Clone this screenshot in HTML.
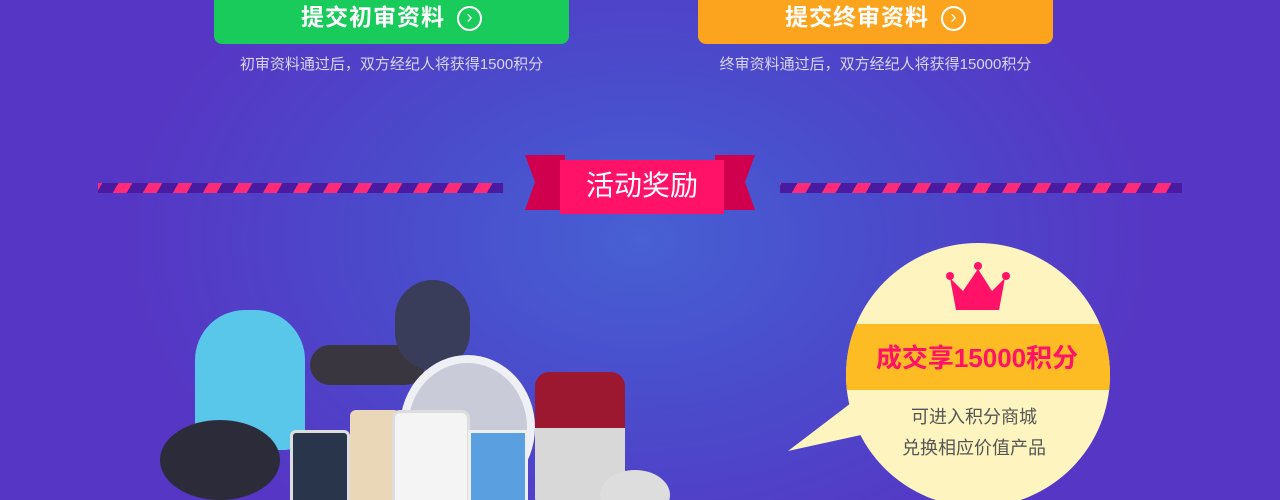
<!DOCTYPE html>
<html style="width:1280px;height:500px;overflow:hidden"><head><meta charset="utf-8"><style>
*{margin:0;padding:0;box-sizing:border-box}
body{width:1280px;height:500px;overflow:hidden;position:relative;font-family:"Liberation Sans","Noto Sans CJK SC",sans-serif;
background:radial-gradient(ellipse 520px 360px at 640px 240px,#4760d2 0%,#4a4ccc 45%,#5636c4 100%);}
.btn{position:absolute;top:-10px;height:54px;border-radius:8px;color:#fff;font-size:23px;font-weight:bold;text-align:center;line-height:54px;letter-spacing:1px}
.btn span{display:inline-block;width:25px;height:25px;border:2px solid #fff;border-radius:50%;font-size:18px;line-height:19px;vertical-align:2px;margin-left:12px;letter-spacing:0;font-weight:normal}
.sub{position:absolute;top:53px;color:#d8d4f4;font-size:15px;text-align:center}
.stripe{position:absolute;top:183px;height:10px;background:repeating-linear-gradient(-60deg,#4a1aa0 0 14px,#ff2a78 14px 26px)}
</style></head><body>
<div class="btn" style="left:214px;width:355px;background:#18cb5a">提交初审资料<span>›</span></div>
<div class="sub" style="left:214px;width:355px">初审资料通过后，双方经纪人将获得1500积分</div>
<div class="btn" style="left:698px;width:355px;background:#fda41f">提交终审资料<span>›</span></div>
<div class="sub" style="left:698px;width:355px">终审资料通过后，双方经纪人将获得15000积分</div>
<div class="stripe" style="left:98px;width:405px"></div>
<div class="stripe" style="left:780px;width:402px"></div>
<svg style="position:absolute;left:520px;top:150px" width="240" height="70">
<polygon points="5,5 45,5 45,60 5,60 15,32" fill="#d0004e"/>
<polygon points="235,5 195,5 195,60 235,60 225,32" fill="#d0004e"/>
<rect x="40" y="10" width="164" height="54" fill="#ff1268"/>
</svg>
<div style="position:absolute;left:560px;top:160px;width:164px;height:54px;color:#fff;font-size:28px;text-align:center;line-height:52px">活动奖励</div>
<div style="position:absolute;left:195px;top:310px;width:110px;height:140px;border-radius:50px 50px 20px 20px;background:#59c7ea"></div>
<div style="position:absolute;left:160px;top:420px;width:120px;height:80px;border-radius:50%;background:#2b2b3a"></div>
<div style="position:absolute;left:310px;top:345px;width:115px;height:40px;border-radius:20px;background:#3a3640"></div>
<div style="position:absolute;left:395px;top:280px;width:75px;height:90px;border-radius:40px;background:#3a3d5a"></div>
<div style="position:absolute;left:400px;top:355px;width:135px;height:145px;border-radius:50%;background:#c9ccd8;border:8px solid #eef0f6"></div>
<div style="position:absolute;left:290px;top:430px;width:60px;height:80px;border-radius:6px;background:#28354a;border:3px solid #ddd"></div>
<div style="position:absolute;left:350px;top:410px;width:50px;height:100px;border-radius:6px;background:#e9d7b8"></div>
<div style="position:absolute;left:392px;top:410px;width:78px;height:100px;border-radius:8px;background:#f4f4f4;border:3px solid #ddd"></div>
<div style="position:absolute;left:468px;top:430px;width:60px;height:80px;background:#5aa0e0;border:3px solid #eee"></div>
<div style="position:absolute;left:535px;top:372px;width:90px;height:140px;border-radius:14px;background:linear-gradient(#9b1830 0 40%,#d8d8d8 40%)"></div>
<div style="position:absolute;left:600px;top:470px;width:70px;height:50px;border-radius:50%;background:#ddd"></div>
<svg style="position:absolute;left:780px;top:240px" width="340" height="260">
<polygon points="8,211 75,160 90,193" fill="#fef4bf"/>
<clipPath id="c"><circle cx="198" cy="135" r="132"/></clipPath>
<circle cx="198" cy="135" r="132" fill="#fef4bf"/>
<rect x="60" y="84" width="280" height="66" fill="#fdbb24" clip-path="url(#c)"/>
<polygon points="176,70 170,38 183,51 198,29 212,51 225,38 219,70" fill="#ff1268"/>
<circle cx="170" cy="36" r="4" fill="#ff1268"/><circle cx="198" cy="26" r="4" fill="#ff1268"/><circle cx="226" cy="36" r="4" fill="#ff1268"/>
<text x="197" y="127" text-anchor="middle" font-size="26" font-weight="bold" fill="#ff1268" font-family="Liberation Sans,Noto Sans CJK SC,sans-serif">成交享15000积分</text>
<text x="194" y="183" text-anchor="middle" font-size="18" fill="#555" font-family="Liberation Sans,Noto Sans CJK SC,sans-serif">可进入积分商城</text>
<text x="194" y="214" text-anchor="middle" font-size="18" fill="#555" font-family="Liberation Sans,Noto Sans CJK SC,sans-serif">兑换相应价值产品</text>
</svg>
</body></html>
